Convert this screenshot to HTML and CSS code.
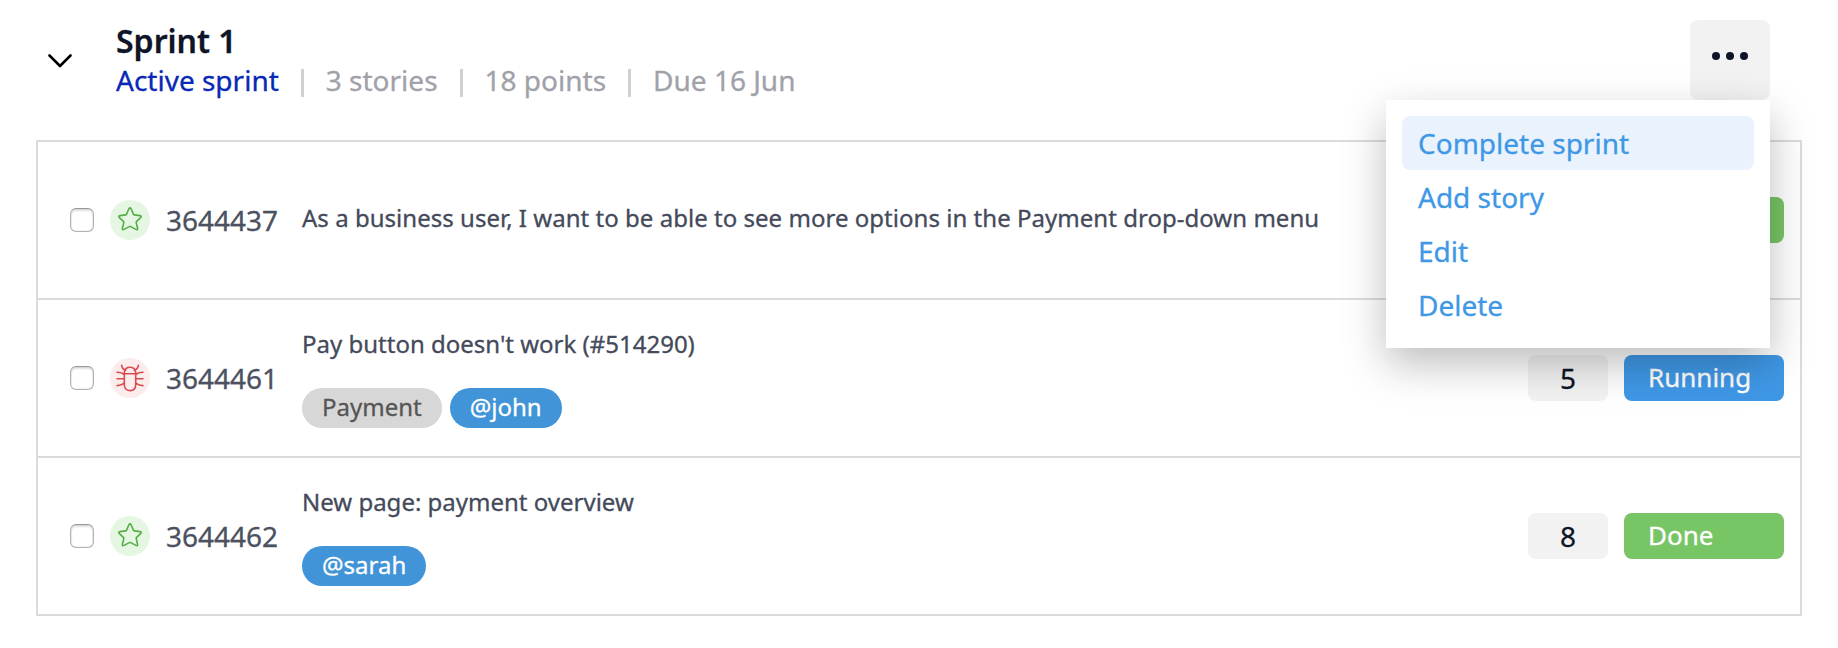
FILE: index.html
```html
<!DOCTYPE html>
<html lang="en">
<head>
<meta charset="utf-8">
<title>Sprint 1</title>
<link rel="stylesheet" href="styles.css">
</head>
<body>
<svg class="defs" aria-hidden="true">
  <symbol id="star" viewBox="0 0 40 40">
    <path d="M18.9 8.8Q20 6.9 21.1 8.8L23.4 14.1Q23.7 14.8 24.4 14.9L29.9 15.6Q32.2 16 30.6 17.7L26.6 21.4Q26.1 21.9 26.2 22.6L27.6 28.2Q28 30.5 25.9 29.4L20.7 26.6Q20 26.2 19.3 26.6L14.1 29.4Q12 30.5 12.4 28.2L13.8 22.6Q13.9 21.9 13.4 21.4L9.4 17.7Q7.8 16 10.1 15.6L15.6 14.9Q16.3 14.8 16.6 14.1Z"/>
  </symbol>
  <symbol id="bug" viewBox="0 0 40 40">
    <path d="M14.3 14.6Q15 9.3 20 9.3T25.7 14.6V26.5Q25.7 32.6 20 32.6T14.3 26.5ZM14.3 15.8H25.7M15.6 12.2Q12 11.2 11.6 7.2M24.4 12.2Q28 11.2 28.4 7.2M14.3 16.6Q12 14.2 7 14.2M25.7 16.6Q28 14.2 33 14.2M14.3 20.8H7M25.7 20.8H33M14.3 24.6Q12 27.6 7 27.6M25.7 24.6Q28 27.6 33 27.6"/>
  </symbol>
</svg>
<main class="sprint">
  <header class="sprint-header">
    <svg class="chevron" viewBox="0 0 24 14"><path d="M1.5 1.5L12 12L22.5 1.5"/></svg>
    <div class="heading">
      <h1 class="title">Sprint 1</h1>
      <div class="meta">
        <span class="active">Active sprint</span>
        <span class="detail">3 stories</span>
        <span class="detail">18 points</span>
        <span class="detail">Due 16 Jun</span>
      </div>
    </div>
    <div class="actions">
      <button class="more" aria-label="More"><i class="dot"></i><i class="dot"></i><i class="dot"></i></button>
      <nav class="menu">
        <a class="menu-item selected">Complete sprint</a>
        <a class="menu-item">Add story</a>
        <a class="menu-item">Edit</a>
        <a class="menu-item">Delete</a>
      </nav>
    </div>
  </header>
  <section class="stories">
    <article class="story">
      <span class="checkbox"></span>
      <svg class="kind feature"><use href="#star"/></svg>
      <span class="number">3644437</span>
      <div class="body"><div class="name single">As a business user, I want to be able to see more options in the Payment drop-down menu</div></div>
      <span class="status done"></span>
    </article>
    <article class="story">
      <span class="checkbox"></span>
      <svg class="kind defect"><use href="#bug"/></svg>
      <span class="number">3644461</span>
      <div class="body">
        <div class="name">Pay button doesn't work (#514290)</div>
        <div class="tags"><span class="tag topic">Payment</span><span class="tag">@john</span></div>
      </div>
      <span class="points">5</span>
      <span class="status running">Running</span>
    </article>
    <article class="story">
      <span class="checkbox"></span>
      <svg class="kind feature"><use href="#star"/></svg>
      <span class="number">3644462</span>
      <div class="body">
        <div class="name">New page: payment overview</div>
        <div class="tags"><span class="tag">@sarah</span></div>
      </div>
      <span class="points">8</span>
      <span class="status done">Done</span>
    </article>
  </section>
</main>
</body>
</html>
```
FILE: styles.css
```css
* { box-sizing: border-box; }
body {
  margin: 0;
  background: #fff;
  font-family: "Noto Sans", sans-serif;
  font-size: 28px;
  color: #0d1526;
  -webkit-text-stroke: .3px currentColor;
}
.defs { display: none; }
.sprint { padding: 20px 36px 32px; }
.sprint-header {
  display: flex;
  align-items: flex-start;
  height: 120px;
  padding: 0 32px 0 12px;
}
.chevron {
  width: 24px;
  height: 14px;
  margin: 34px 44px 0 0;
  fill: none;
  stroke: #000;
  stroke-width: 2.6;
  stroke-linecap: round;
  stroke-linejoin: round;
}
.heading { flex: 1; }
.title {
  margin: 0;
  font-size: 32px;
  font-weight: 600;
  line-height: 42px;
}
.meta {
  display: flex;
  align-items: center;
  line-height: 36px;
}
.active { color: #0729b5; }
.detail { display: flex; align-items: center; color: #9fa2a9; }
.detail::before {
  content: "";
  width: 3px;
  height: 28px;
  margin: 5px 22px 0;
  background: #cfd0d4;
}
.actions { position: relative; }
.more {
  display: flex;
  justify-content: center;
  gap: 6px;
  width: 80px;
  height: 80px;
  padding: 32px 0 40px;
  border: 0;
  border-radius: 8px;
  background: #f2f2f2;
}
.dot { width: 8px; height: 8px; border-radius: 50%; background: #0d1526; }
.menu {
  position: absolute;
  top: 80px;
  right: 0;
  width: 384px;
  padding: 16px;
  background: #fff;
  box-shadow: 0 16px 40px rgba(0, 0, 0, .26);
}
.menu-item {
  display: block;
  padding-left: 16px;
  border-radius: 8px;
  line-height: 54px;
  color: #3f98e6;
}
.selected { background: #eaf3fd; }
.stories { border: 2px solid #dbdbdb; }
.story {
  display: flex;
  align-items: center;
  height: 156px;
  padding: 0 16px 0 32px;
}
.story + .story { height: 158px; border-top: 2px solid #dbdbdb; }
.checkbox {
  width: 24px;
  height: 24px;
  margin-right: 16px;
  border: 1px solid #b2b2b2;
  border-top-color: #999;
  border-radius: 6px;
  box-shadow: inset 0 2px 2px rgba(0, 0, 0, .12), inset 0 0 1px 1px rgba(0, 0, 0, .06);
}
.kind {
  width: 40px;
  height: 40px;
  margin-right: 16px;
  border-radius: 50%;
  fill: none;
  stroke-width: 1.6;
  stroke-linejoin: round;
  stroke-linecap: round;
}
.feature { background: #e5f7e2; stroke: #55ad46; }
.defect { background: #fceded; stroke: #d94b50; }
.number { width: 136px; color: #4b5161; line-height: 40px; }
.body { flex: 1; }
.name {
  padding-bottom: 2px;
  font-size: 24px;
  line-height: 32px;
  color: #444a5a;
}
.single { padding-bottom: 4px; letter-spacing: .03px; }
.tags { display: flex; gap: 8px; margin-top: 26px; }
.tag {
  height: 40px;
  padding: 0 20px;
  border-radius: 20px;
  background: #4094d7;
  color: #fff;
  font-size: 24px;
  line-height: 38px;
}
.topic { background: #d7d7d7; color: #555; }
.points {
  width: 80px;
  margin-right: 16px;
  border-radius: 8px;
  background: #f2f2f2;
  line-height: 46px;
  text-align: center;
}
.status {
  width: 160px;
  height: 46px;
  padding-left: 24px;
  border-radius: 8px;
  color: #fff;
  font-size: 26px;
  line-height: 45px;
}
.running { background: #3f98e6; }
.done { background: #78c566; }
```
